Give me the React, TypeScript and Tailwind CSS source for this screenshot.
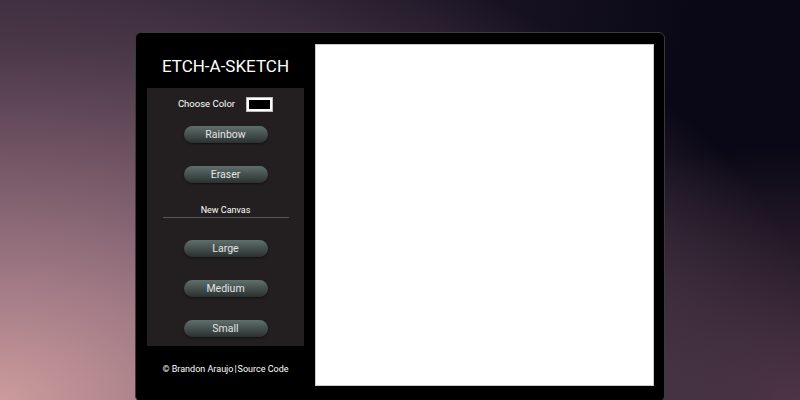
import React, { useState } from 'react';

const sizes = ['Large', 'Medium', 'Small'];

function PillButton({ label, onClick }: { label: string; onClick?: () => void }) {
  return (
    <button
      onClick={onClick}
      className="block w-[84px] h-[17px] rounded-full bg-[linear-gradient(to_bottom,#5f706c,#2b3130)] text-[10.5px] leading-[17px] text-[#e4e4e4] shadow-[0_1px_2px_rgba(0,0,0,0.5)]"
    >
      {label}
    </button>
  );
}

export default function App() {
  const [color, setColor] = useState('#000000');
  const [mode, setMode] = useState<string>('color');

  return (
    <div
      className="w-full h-[400px] overflow-hidden flex justify-center bg-[radial-gradient(ellipse_110%_130%_at_0%_100%,#cc9b9c_0%,#a27b86_22%,#765867_45%,#4a3748_68%,rgba(44,32,48,0)_95%),radial-gradient(ellipse_60%_75%_at_100%_100%,#4f3545_0%,rgba(40,28,40,0)_85%),linear-gradient(100deg,#2e2434_0%,#1c1626_50%,#0a0816_80%)]"
      style={{ fontFamily: 'Roboto, "Liberation Sans", sans-serif' }}
    >
      <div className="mt-[32px] w-[530px] h-[370px] flex bg-black rounded-[6px] border border-[#3a3a3a]">
        {/* Sidebar */}
        <div className="w-[179px] flex flex-col">
          <h1 className="h-[55px] pt-[21px] text-center text-[17px] leading-[24px] text-white">ETCH-A-SKETCH</h1>
          <div className="ml-[11px] w-[157px] h-[258px] bg-[#231f20] flex flex-col items-center">
            <div className="mt-[9px] flex items-center gap-[11px] h-[15px]">
              <span className="text-[9.5px] text-white">Choose Color</span>
              <label className="w-[27px] h-[15px] border border-[#bbb] bg-white p-[2px] flex">
                <span className="flex-1" style={{ background: color }} />
                <input
                  type="color"
                  value={color}
                  onChange={(e) => setColor(e.target.value)}
                  className="hidden"
                />
              </label>
            </div>
            <div className="mt-[14px] flex">
              <PillButton label="Rainbow" onClick={() => setMode('rainbow')} />
            </div>
            <div className="mt-[23px] flex">
              <PillButton label="Eraser" onClick={() => setMode('eraser')} />
            </div>
            <div className="mt-[21px] w-[126px] border-b border-[#555] text-center text-[9px] leading-[12px] pb-[1px] text-white">
              New Canvas
            </div>
            <div className="mt-[22px] flex flex-col gap-[23px]">
              {sizes.map((s) => (
                <PillButton key={s} label={s} onClick={() => setMode(s)} />
              ))}
            </div>
          </div>
          <footer className="mt-[17px] text-center text-[9px] text-white">
            © Brandon Araujo<span className="mx-[1px]">|</span>Source Code
          </footer>
        </div>

        {/* Drawing canvas */}
        <div
          data-mode={mode}
          className="mt-[11px] w-[339px] h-[342px] bg-white border border-[#ccc]"
        />
      </div>
    </div>
  );
}
